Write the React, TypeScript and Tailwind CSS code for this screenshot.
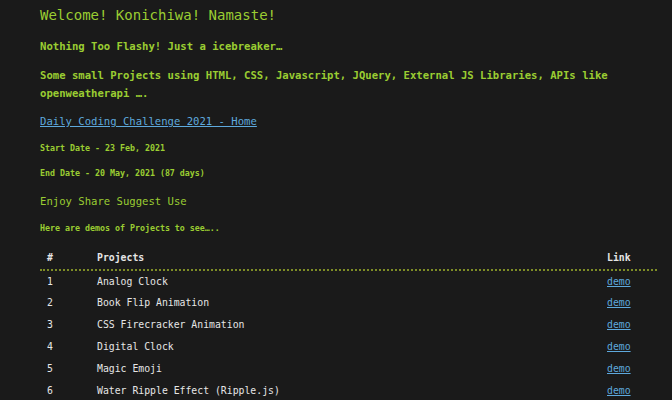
import React from "react";

const projects = [
  "Analog Clock",
  "Book Flip Animation",
  "CSS Firecracker Animation",
  "Digital Clock",
  "Magic Emoji",
  "Water Ripple Effect (Ripple.js)",
];

export default function App() {
  return (
    <div
      className="w-[672px] h-[400px] overflow-hidden bg-[#1a1a1a] pl-[40px] pr-[15px] pt-[5px] text-[#9acd32]"
      style={{ fontFamily: '"DejaVu Sans Mono", "Liberation Mono", monospace' }}
    >
      <h1 className="text-[14px] leading-[20px]">Welcome! Konichiwa! Namaste!</h1>
      <p className="mt-[13px] text-[10.6px] leading-[16px] font-bold">
        Nothing Too Flashy! Just a icebreaker…
      </p>
      <p className="mt-[12px] text-[10.6px] leading-[18px] font-bold pr-[40px]">
        Some small Projects using HTML, CSS, Javascript, JQuery, External JS Libraries, APIs like openweatherapi ….
      </p>
      <a href="#" className="block mt-[11px] text-[10.6px] leading-[16px] text-[#5ea9dd] underline">
        Daily Coding Challenge 2021 - Home
      </a>
      <p className="mt-[13px] text-[8.3px] leading-[12px] font-bold">Start Date - 23 Feb, 2021</p>
      <p className="mt-[13px] text-[8.3px] leading-[12px] font-bold">End Date - 20 May, 2021 (87 days)</p>
      <p className="mt-[14px] text-[10.6px] leading-[16px]">Enjoy Share Suggest Use</p>
      <p className="mt-[13px] text-[8.3px] leading-[12px] font-bold">Here are demos of Projects to see…..</p>
      <div className="mt-[14px] text-[9.8px] text-[#e6e6e6]">
        <div className="grid grid-cols-[57px_1fr_50px] h-[23px] items-center border-b-2 border-dotted border-[#7d8c26] font-bold">
          <span className="pl-[7px]">#</span>
          <span>Projects</span>
          <span>Link</span>
        </div>
        {projects.map((p, i) => (
          <div key={p} className="grid grid-cols-[57px_1fr_50px] h-[21.8px] items-center">
            <span className="pl-[7px]">{i + 1}</span>
            <span>{p}</span>
            <a href="#" className="text-[#5ea9dd] underline">demo</a>
          </div>
        ))}
      </div>
    </div>
  );
}
